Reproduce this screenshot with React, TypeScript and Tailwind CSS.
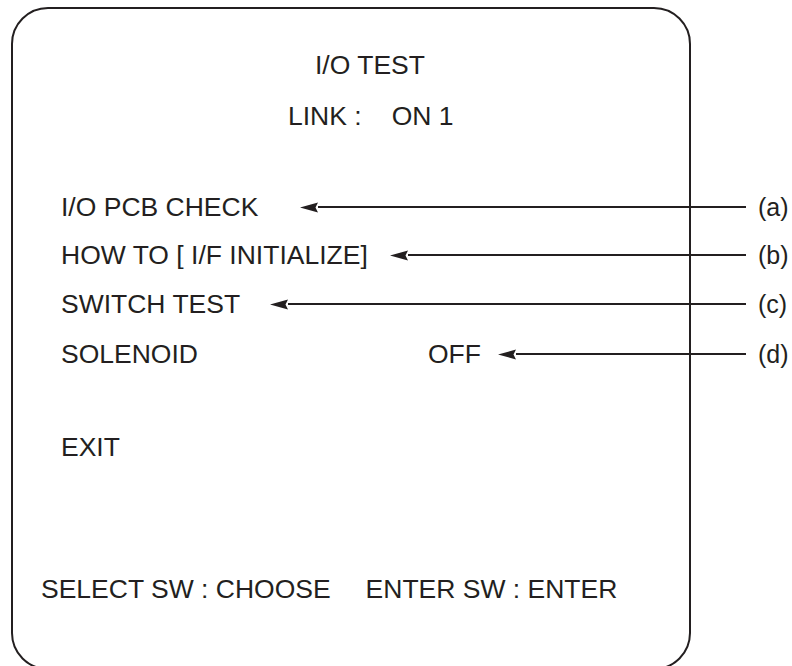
const ink = "#231f20"

const Arrow = () => {
  return (
    <div className="flex flex-1 items-center mr-[12px]">
      <svg width="18" height="11" viewBox="0 0 18 11" className="shrink-0">
        <path d="M0 5.5 L18 0.5 L15.5 5.5 L18 10.5 Z" fill={ink} />
      </svg>
      <div className="h-[1.5px] flex-1 bg-[#231f20]" />
    </div>
  )
}

const Callout = ({ label }: { label: string }) => {
  return (
    <span className="w-[34px] shrink-0 text-[25px] leading-[30px]">{label}</span>
  )
}

const App = () => {
  return (
    <div className="w-[792px] h-[666px] overflow-hidden bg-white pt-[7px] pl-[11px] text-[#231f20] font-['Liberation_Sans',Arial,sans-serif]">
      <div className="w-[680px] h-[663px] border-2 border-[#231f20] rounded-[37px] flex flex-col pt-[41px] pl-[48px] text-[26.5px] leading-[30px]">
        <div className="h-[30px] ml-[254px]">I/O TEST</div>
        <div className="h-[30px] mt-[21px] ml-[227px] flex">
          <span>LINK :</span>
          <span className="ml-[30px]">ON 1</span>
        </div>

        <div className="h-[30px] mt-[61px] mr-[-103px] flex items-center">
          <span className="w-[239px] shrink-0">I/O PCB CHECK</span>
          <Arrow />
          <Callout label="(a)" />
        </div>
        <div className="h-[30px] mt-[18px] mr-[-103px] flex items-center">
          <span className="w-[329px] shrink-0">HOW TO [ I/F INITIALIZE]</span>
          <Arrow />
          <Callout label="(b)" />
        </div>
        <div className="h-[30px] mt-[19px] mr-[-103px] flex items-center">
          <span className="w-[209px] shrink-0">SWITCH TEST</span>
          <Arrow />
          <Callout label="(c)" />
        </div>
        <div className="h-[30px] mt-[20px] mr-[-103px] flex items-center">
          <span className="w-[367px] shrink-0">SOLENOID</span>
          <span className="w-[70px] shrink-0">OFF</span>
          <Arrow />
          <Callout label="(d)" />
        </div>

        <div className="h-[30px] mt-[63px]">EXIT</div>

        <div className="h-[30px] mt-[112px] ml-[-20px] flex whitespace-nowrap">
          <span>SELECT SW : CHOOSE</span>
          <span className="ml-[35px]">ENTER SW : ENTER</span>
        </div>
      </div>
    </div>
  )
}

export default App
